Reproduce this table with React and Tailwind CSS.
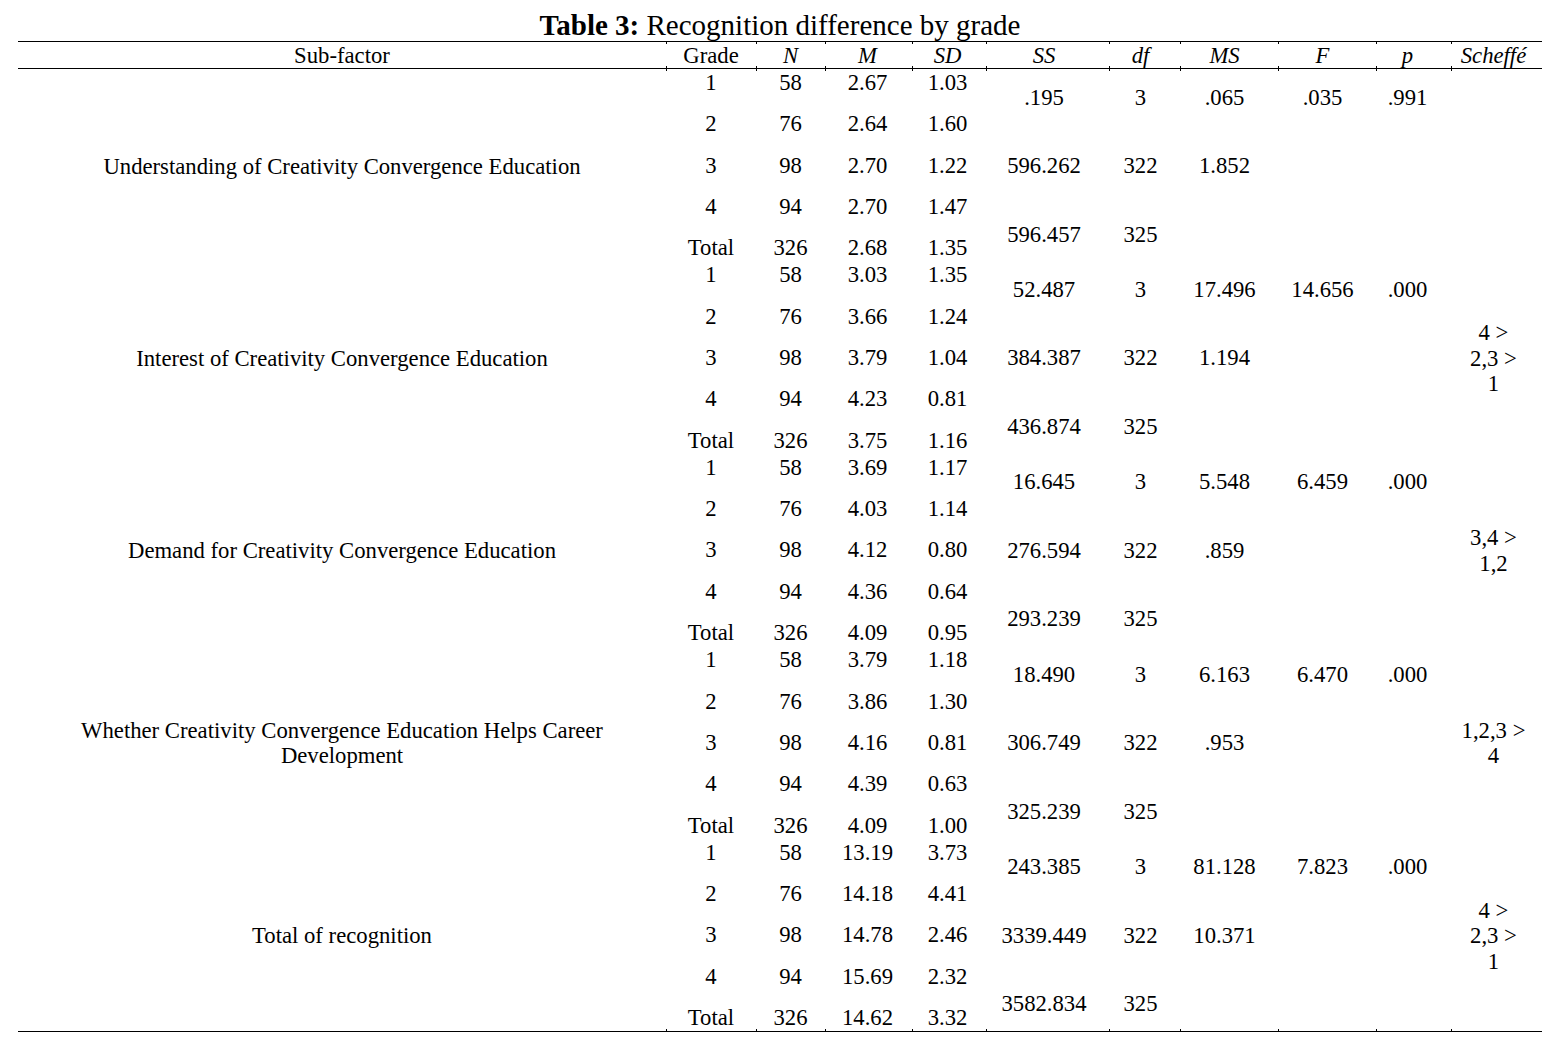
const cols = {
  grade: "w-[90px]",
  n: "w-[69px]",
  m: "w-[87px] pr-[2px]",
  sd: "w-[74px] pr-[3px]",
  ss: "w-[123px] pr-[7px]",
  df: "w-[71px] pr-[8px]",
  ms: "w-[98px] pr-[9px]",
  f: "w-[98px] pr-[9px]",
  p: "w-[75px] pr-[12px]",
  scheffe: "w-[91px] pr-[6px]",
};

const tickCols = [
  "w-[648px]",
  "w-[90px]",
  "w-[69px]",
  "w-[87px]",
  "w-[74px]",
  "w-[123px]",
  "w-[71px]",
  "w-[98px]",
  "w-[98px]",
  "w-[75px]",
  "w-[91px]",
];

const groups = [
  {
    name: ["Understanding of Creativity Convergence Education"],
    rows: [
      ["1", "58", "2.67", "1.03"],
      ["2", "76", "2.64", "1.60"],
      ["3", "98", "2.70", "1.22"],
      ["4", "94", "2.70", "1.47"],
      ["Total", "326", "2.68", "1.35"],
    ],
    anova: [
      [".195", "3", ".065", ".035", ".991"],
      ["596.262", "322", "1.852", "", ""],
      ["596.457", "325", "", "", ""],
    ],
    scheffe: [],
  },
  {
    name: ["Interest of Creativity Convergence Education"],
    rows: [
      ["1", "58", "3.03", "1.35"],
      ["2", "76", "3.66", "1.24"],
      ["3", "98", "3.79", "1.04"],
      ["4", "94", "4.23", "0.81"],
      ["Total", "326", "3.75", "1.16"],
    ],
    anova: [
      ["52.487", "3", "17.496", "14.656", ".000"],
      ["384.387", "322", "1.194", "", ""],
      ["436.874", "325", "", "", ""],
    ],
    scheffe: ["4 >", "2,3 >", "1"],
  },
  {
    name: ["Demand for Creativity Convergence Education"],
    rows: [
      ["1", "58", "3.69", "1.17"],
      ["2", "76", "4.03", "1.14"],
      ["3", "98", "4.12", "0.80"],
      ["4", "94", "4.36", "0.64"],
      ["Total", "326", "4.09", "0.95"],
    ],
    anova: [
      ["16.645", "3", "5.548", "6.459", ".000"],
      ["276.594", "322", ".859", "", ""],
      ["293.239", "325", "", "", ""],
    ],
    scheffe: ["3,4 >", "1,2"],
  },
  {
    name: [
      "Whether Creativity Convergence Education Helps Career",
      "Development",
    ],
    rows: [
      ["1", "58", "3.79", "1.18"],
      ["2", "76", "3.86", "1.30"],
      ["3", "98", "4.16", "0.81"],
      ["4", "94", "4.39", "0.63"],
      ["Total", "326", "4.09", "1.00"],
    ],
    anova: [
      ["18.490", "3", "6.163", "6.470", ".000"],
      ["306.749", "322", ".953", "", ""],
      ["325.239", "325", "", "", ""],
    ],
    scheffe: ["1,2,3 >", "4"],
  },
  {
    name: ["Total of recognition"],
    rows: [
      ["1", "58", "13.19", "3.73"],
      ["2", "76", "14.18", "4.41"],
      ["3", "98", "14.78", "2.46"],
      ["4", "94", "15.69", "2.32"],
      ["Total", "326", "14.62", "3.32"],
    ],
    anova: [
      ["243.385", "3", "81.128", "7.823", ".000"],
      ["3339.449", "322", "10.371", "", ""],
      ["3582.834", "325", "", "", ""],
    ],
    scheffe: ["4 >", "2,3 >", "1"],
  },
];

const descCols = [cols.grade, cols.n, cols.m, cols.sd];
const anovaCols = [cols.ss, cols.df, cols.ms, cols.f, cols.p];

const Ticks = ({ className }) => (
  <div className={`flex h-[2px] ${className}`}>
    {tickCols.map((w, i) => (
      <div key={i} className={`${w} h-full ${i > 0 ? "border-l border-black" : ""}`} />
    ))}
  </div>
);

const Group = ({ group }) => (
  <div className="flex h-[192.4px]">
    <div className="w-[648px] flex flex-col items-center justify-center text-center leading-[25px] pt-[2px]">
      {group.name.map((line) => (
        <span key={line}>{line}</span>
      ))}
    </div>
    {descCols.map((w, c) => (
      <div key={c} className={`${w} flex flex-col justify-between text-center pt-[1px]`}>
        {group.rows.map((row, r) => (
          <div key={r} className="h-[26px] leading-[26px]">
            {row[c]}
          </div>
        ))}
      </div>
    ))}
    {anovaCols.map((w, c) => (
      <div
        key={c}
        className={`${w} flex flex-col justify-between text-center pt-[15.6px] pb-[13.8px]`}
      >
        {group.anova.map((row, r) => (
          <div key={r} className="h-[26px] leading-[26px]">
            {row[c]}
          </div>
        ))}
      </div>
    ))}
    <div className={`${cols.scheffe} flex flex-col items-center justify-center text-center leading-[25.5px] pt-[2px]`}>
      {group.scheffe.map((line) => (
        <span key={line}>{line}</span>
      ))}
    </div>
  </div>
);

export default function App() {
  return (
    <div className="min-h-[1050px] bg-white text-black font-['Liberation_Serif',serif] text-[22.7px]">
      <div className="w-[1524px] ml-[18px]">
        <div className="h-[41px] pt-[9px] text-center text-[29px] leading-[32px]">
          <span className="font-bold">Table 3:</span> Recognition difference by grade
        </div>
        <div className="border-t border-black" />
        <Ticks className="-mb-[2px]" />
        <div className="flex h-[26px] leading-[22px] pt-[3px]">
          <div className="w-[648px] text-center">Sub-factor</div>
          <div className={`${cols.grade} text-center`}>Grade</div>
          <div className={`${cols.n} text-center italic`}>N</div>
          <div className={`${cols.m} text-center italic`}>M</div>
          <div className={`${cols.sd} text-center italic`}>SD</div>
          <div className={`${cols.ss} text-center italic`}>SS</div>
          <div className={`${cols.df} text-center italic`}>df</div>
          <div className={`${cols.ms} text-center italic`}>MS</div>
          <div className={`${cols.f} text-center italic`}>F</div>
          <div className={`${cols.p} text-center italic`}>p</div>
          <div className={`${cols.scheffe} text-center italic`}>Scheffé</div>
        </div>
        <Ticks className="-mt-[2px]" />
        <div className="border-t border-black" />
        <Ticks className="-mb-[2px]" />
        {groups.map((g, i) => (
          <Group key={i} group={g} />
        ))}
        <Ticks className="-mt-[2px]" />
        <div className="border-t border-black" />
      </div>
    </div>
  );
}
